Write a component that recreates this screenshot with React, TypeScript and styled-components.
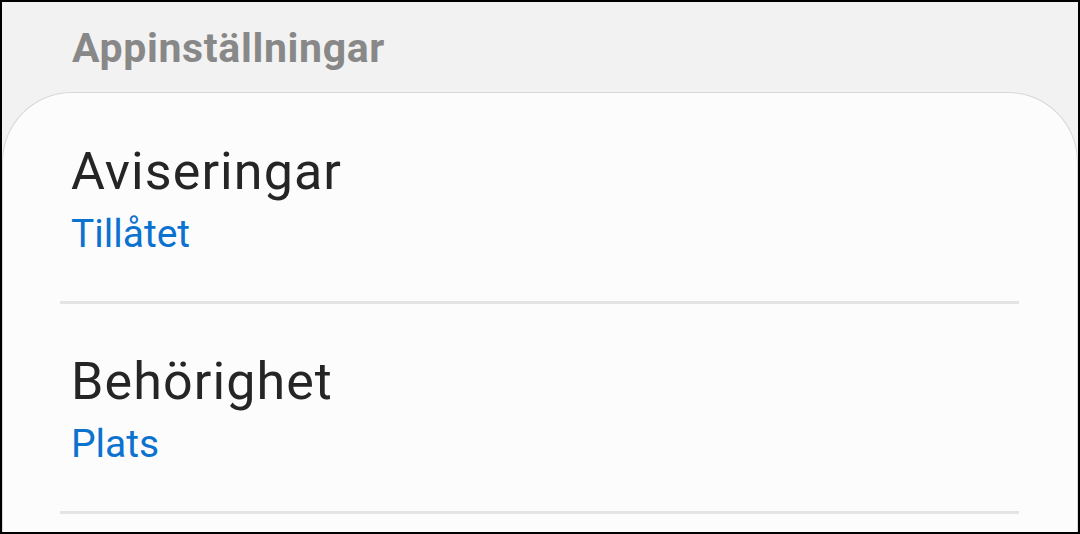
import React from "react";
import styled, { createGlobalStyle } from "styled-components";

const Global = createGlobalStyle`
  html, body { margin: 0; padding: 0; background: #000; }
  * { box-sizing: border-box; }
`;

const Frame = styled.div`
  width: 1080px;
  height: 534px;
  border: 2px solid #000;
  background: #f2f2f2;
  overflow: hidden;
  display: flex;
  flex-direction: column;
  font-family: Roboto, "Noto Sans", sans-serif;
`;

const Header = styled.div`
  height: 90px;
  flex-shrink: 0;
  padding: 24px 0 0 70px;
`;

const HeaderTitle = styled.h1`
  margin: 0;
  font-size: 41px;
  line-height: 44px;
  font-weight: 700;
  letter-spacing: 0.65px;
  color: #888888;
`;

const Card = styled.div`
  flex: 1;
  background: #fcfcfc;
  border: 1px solid #d8d8d8;
  border-bottom: none;
  border-radius: 70px 70px 0 0;
  padding-top: 1px;
  display: flex;
  flex-direction: column;
`;

const RowWrap = styled.div`
  display: flex;
  flex-direction: column;
  flex-shrink: 0;
`;

const Row = styled.div`
  height: 207px;
  display: flex;
  flex-direction: column;
  padding: 48px 0 0 68px;
`;

const RowTitle = styled.div`
  font-size: 52px;
  line-height: 60px;
  letter-spacing: 1.1px;
  color: #252525;
`;

const RowValue = styled.div`
  margin-top: 10px;
  font-size: 39px;
  line-height: 44px;
  color: #0b72d0;
`;

const Divider = styled.div`
  height: 3px;
  background: #e4e4e4;
  margin: 0 58px 0 57px;
`;

const SettingRow: React.FC<{ title: string; value: string }> = ({ title, value }) => (
  <RowWrap>
    <Row>
      <RowTitle>{title}</RowTitle>
      <RowValue>{value}</RowValue>
    </Row>
    <Divider />
  </RowWrap>
);

export default function App() {
  return (
    <>
      <Global />
      <Frame>
        <Header>
          <HeaderTitle>Appinställningar</HeaderTitle>
        </Header>
        <Card>
          <SettingRow title="Aviseringar" value="Tillåtet" />
          <SettingRow title="Behörighet" value="Plats" />
        </Card>
      </Frame>
    </>
  );
}
